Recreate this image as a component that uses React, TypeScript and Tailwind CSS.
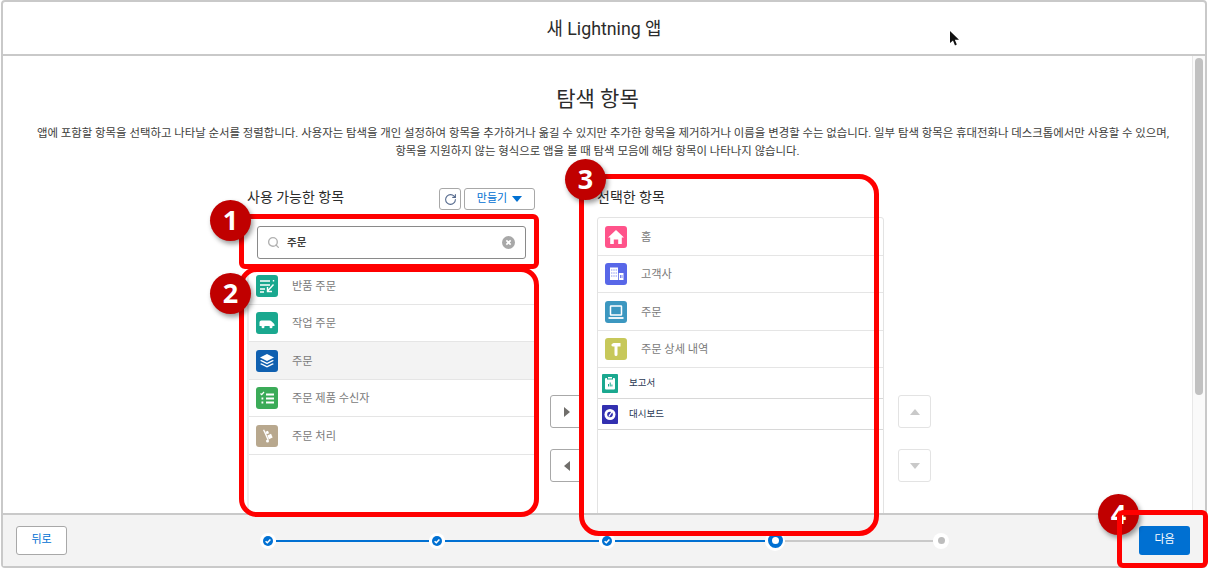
import { RotateCw, Search } from "lucide-react";
import type { ReactNode } from "react";

function Tile({ color, small, children }: { color: string; small?: boolean; children: ReactNode }) {
  return (
    <span
      className={`flex shrink-0 items-center justify-center ${small ? "h-[19px] w-[16px] rounded-[1px]" : "mt-[1px] h-[22px] w-[22px] rounded-[3px]"} ${color}`}
    >
      {children}
    </span>
  );
}

const ReturnIcon = (
  <svg viewBox="0 0 22 22" className="h-[22px] w-[22px]" fill="none" stroke="white" strokeWidth="1.4">
    <path d="M4 6h10M4 10h10M4 14h5M4 17h4" />
    <path d="M17.5 5v1.5M17.5 9.5l-5.5 6M11.5 12v4.5h4.5" />
  </svg>
);
const VanIcon = (
  <svg viewBox="0 0 22 22" className="h-[22px] w-[22px]" fill="white">
    <path d="M3.5 10.5c0-1.2.8-2 2-2h8c1 0 1.600.4 2.200 1l1.800 1.700c.6.4 1 1 1 1.800v1H3.500z" />
    <circle cx="7" cy="14.800" r="1.500" />
    <circle cx="15" cy="14.800" r="1.500" />
  </svg>
);
const StackIcon = (
  <svg viewBox="0 0 22 22" className="h-[22px] w-[22px]" fill="white">
    <path d="M11 4l7 3.500-7 3.500-7-3.500z" />
    <path d="M5.500 10l5.500 2.700 5.500-2.700 1.500.8-7 3.500-7-3.500z" />
    <path d="M5.500 13.300l5.500 2.700 5.500-2.700 1.500.8-7 3.500-7-3.500z" />
  </svg>
);
const ChecklistIcon = (
  <svg viewBox="0 0 22 22" className="h-[22px] w-[22px]" fill="none" stroke="white" strokeWidth="1.800">
    <path d="M10 7.500h8M10 11.500h8M10 15.500h8" />
    <path d="M4.500 6.500l1.200 1.200L8 5" strokeWidth="1.200" />
    <path d="M5.500 11.500h1.800M5.500 15.500h1.800" />
  </svg>
);
const DollyIcon = (
  <svg viewBox="0 0 22 22" className="h-[22px] w-[22px]" fill="white">
    <path d="M7 5l1.200-.6 4.600 10.200-1.200.6z" />
    <rect x="12" y="9.500" width="4" height="4" transform="rotate(-24 14 11.500)" />
    <rect x="9.800" y="6.200" width="2.800" height="2.800" transform="rotate(-24 11 7.500)" />
    <circle cx="11.500" cy="16" r="1.500" />
  </svg>
);
const HomeIcon = (
  <svg viewBox="0 0 22 22" className="h-[22px] w-[22px]" fill="white">
    <path d="M11 4l8 7.500h-2.200V18h-3.600v-4.500H8.800V18H5.200v-6.500H3z" />
  </svg>
);
const BuildingIcon = (
  <svg viewBox="0 0 22 22" className="h-[22px] w-[22px]" fill="white">
    <path fillRule="evenodd" d="M5 4.500h8V17H5zM6.300 6.500v1h1v-1zM8.500 6.500v1h1v-1zM10.700 6.500v1h1v-1zM6.300 9.500v1h1v-1zM8.500 9.500v1h1v-1zM10.700 9.500v1h1v-1zM6.300 12.500v1h1v-1zM8.500 12.500v1h1v-1zM10.700 12.500v1h1v-1z" />
    <path fillRule="evenodd" d="M13.800 10H18.500v7h-4.700zM15 12v3h.8v-3zM16.600 12v3h.8v-3z" />
  </svg>
);
const LaptopIcon = (
  <svg viewBox="0 0 22 22" className="h-[22px] w-[22px]" fill="none" stroke="white" strokeWidth="1.500">
    <rect x="5.500" y="5" width="11" height="9" rx="0.500" />
    <path d="M3.500 17h15" strokeWidth="1.800" />
  </svg>
);
const HammerIcon = (
  <svg viewBox="0 0 22 22" className="h-[22px] w-[22px]" fill="white">
    <path d="M9.500 5H15.500v3.500h-3V16.500a1.500 1.500 0 0 1-3 0V8.500H8C6.800 8.500 6.300 7.500 6.500 6.500 7.200 5.500 8.300 5 9.500 5z" />
  </svg>
);
const ClipboardIcon = (
  <svg viewBox="0 0 16 19" className="h-[19px] w-[16px]" fill="white">
    <path fillRule="evenodd" d="M6 3h4v1.500H6zM4 4h1v1.500h6V4h1a1 1 0 0 1 1 1v9.500a1 1 0 0 1-1 1H4a1 1 0 0 1-1-1V5a1 1 0 0 1 1-1zM6 10v2.500h1V10zM7.700 8.500v4h1v-4zM9.400 10.500v2h1v-2z" />
  </svg>
);
const GaugeIcon = (
  <svg viewBox="0 0 16 19" className="h-[19px] w-[16px]">
    <circle cx="8" cy="9.500" r="5.500" fill="white" />
    <circle cx="8" cy="9.500" r="2.800" fill="#3230b0" />
    <path d="M6.800 11.500L9.800 7" stroke="white" strokeWidth="1.300" />
  </svg>
);

function Row({ icon, label, active }: { icon: ReactNode; label: string; active?: boolean }) {
  return (
    <div
      className={`flex h-[37.5px] items-center gap-[14px] border-b border-[#e5e5e5] pl-[7px] text-[11.2px] text-[#7a7a7a] ${active ? "bg-[#f3f3f3]" : ""}`}
    >
      {icon}
      <span className="mt-[4px]">{label}</span>
    </div>
  );
}

function SmallRow({ icon, label }: { icon: ReactNode; label: string }) {
  return (
    <div className="flex h-[31px] items-center gap-[11px] border-b border-[#d8d8d8] pl-[4px] text-[9.5px] text-[#2b3a55]">
      {icon}
      <span>{label}</span>
    </div>
  );
}

function ArrowButton({ dir, disabled }: { dir: "left" | "right" | "up" | "down"; disabled?: boolean }) {
  const paths = { right: "M5 3l6 5-6 5z", left: "M11 3L5 8l6 5z", up: "M3 11l5-6 5 6z", down: "M3 5l5 6 5-6z" };
  return (
    <div
      className={`flex h-[33px] w-[33px] items-center justify-center rounded-[3px] border bg-white ${disabled ? "border-[#e3e3e3]" : "border-[#a8a8a8]"}`}
    >
      <svg viewBox="0 0 16 16" className="h-[16px] w-[16px]" fill={disabled ? "#c9c9c9" : "#706e6b"}>
        <path d={paths[dir]} />
      </svg>
    </div>
  );
}

function Step({ state }: { state: "done" | "active" | "todo" }) {
  if (state === "active") {
    return (
      <span className="flex h-[20px] w-[20px] shrink-0 items-center justify-center rounded-full bg-white">
        <span className="h-[15px] w-[15px] rounded-full border-[4px] border-[#0070d2] bg-white" />
      </span>
    );
  }
  return (
    <span className="flex h-[16px] w-[16px] shrink-0 items-center justify-center rounded-full bg-white">
      {state === "done" ? (
        <span className="flex h-[10px] w-[10px] items-center justify-center rounded-full bg-[#0070d2]">
          <svg viewBox="0 0 10 10" className="h-[10px] w-[10px]" fill="none" stroke="white" strokeWidth="1.5">
            <path d="M2.600 5.200l1.700 1.600 3.100-3.400" />
          </svg>
        </span>
      ) : (
        <span className="h-[7px] w-[7px] rounded-full bg-[#bdbdbd]" />
      )}
    </span>
  );
}

function Badge({ n, className }: { n: string; className: string }) {
  return (
    <div
      className={`absolute flex h-[41px] w-[41px] items-center justify-center rounded-full bg-[#c00000] font-['Open_Sans',sans-serif] text-[27px] font-bold text-white shadow-[2px_3px_5px_rgba(0,0,0,0.4)] ${className}`}
    >
      {n}
    </div>
  );
}

export default function App() {
  return (
    <div className="relative h-[570px] w-[1210px] overflow-hidden bg-white font-['Roboto','Noto_Sans_CJK_KR',sans-serif]">
      <div className="ml-[1px] flex h-[568px] w-[1206px] flex-col rounded-[4px] border-2 border-[#c9c9c9]">
        <header className="flex h-[54px] shrink-0 items-center justify-center border-b-2 border-[#c9c9c9] pt-[2px] text-[17.8px] text-[#2b2b2b]">
          새 Lightning 앱
        </header>

        <div className="flex min-h-0 flex-1">
          <main className="min-w-0 flex-1 overflow-hidden">
            <h1 className="mt-[28px] text-center text-[21px] leading-[30px] text-[#2b2b2b]">탐색 항목</h1>
            <p className="mt-[10px] text-center text-[11.42px] leading-[18px] text-[#3e3e3c]">
              <span className="pl-[11px]">
                앱에 포함할 항목을 선택하고 나타날 순서를 정렬합니다. 사용자는 탐색을 개인 설정하여 항목을 추가하거나 옮길 수 있지만 추가한 항목을 제거하거나 이름을 변경할 수는 없습니다. 일부 탐색 항목은 휴대전화나 데스크톱에서만 사용할 수 있으며,
              </span>
              <br />
              항목을 지원하지 않는 형식으로 앱을 볼 때 탐색 모음에 해당 항목이 나타나지 않습니다.
            </p>

            <div className="ml-[244px] mt-[26px] flex">
              <section className="w-[288px]">
                <div className="flex h-[24px] items-center justify-between">
                  <span className="mb-[2px] text-[14px] text-[#2b2b2b]">사용 가능한 항목</span>
                  <div className="mt-[2px] flex gap-[3px]">
                    <span className="flex h-[22px] w-[22px] items-center justify-center rounded-[3px] border border-[#a8a8a8] text-[#54698d]">
                      <RotateCw size={13} />
                    </span>
                    <span className="flex h-[22px] w-[71px] items-center justify-center gap-[5px] rounded-[3px] border border-[#a8a8a8] text-[11px] text-[#0070d2]">
                      만들기
                      <svg viewBox="0 0 10 6" className="h-[6px] w-[10px]" fill="#0070d2">
                        <path d="M0 0h10L5 6z" />
                      </svg>
                    </span>
                  </div>
                </div>
                <div className="ml-[10px] mt-[16px] flex h-[33px] w-[269px] items-center rounded-[3px] border border-[#8a8a8a] pl-[9px] pr-[10px] text-[10.5px] font-bold text-[#3e3e3c]">
                  <Search size={13} strokeWidth={2.5} className="text-[#b0b0b0]" />
                  <span className="ml-[7px] flex-1">주문</span>
                  <svg viewBox="0 0 12 12" className="h-[13px] w-[13px]">
                    <circle cx="6" cy="6" r="6" fill="#a8a8a8" />
                    <path d="M4 4l4 4M8 4l-4 4" stroke="white" strokeWidth="1.5" />
                  </svg>
                </div>
                <div className="mt-[8px] h-[300px] border-l-2 border-[#eeeeee]">
                  <Row icon={<Tile color="bg-[#1aa88f]">{ReturnIcon}</Tile>} label="반품 주문" />
                  <Row icon={<Tile color="bg-[#1aa88f]">{VanIcon}</Tile>} label="작업 주문" />
                  <Row icon={<Tile color="bg-[#1060b0]">{StackIcon}</Tile>} label="주문" active />
                  <Row icon={<Tile color="bg-[#3bab58]">{ChecklistIcon}</Tile>} label="주문 제품 수신자" />
                  <Row icon={<Tile color="bg-[#b8a88e]">{DollyIcon}</Tile>} label="주문 처리" />
                </div>
              </section>

              <div className="ml-[15px] mt-[209px] flex flex-col gap-[21px]">
                <ArrowButton dir="right" />
                <ArrowButton dir="left" />
              </div>

              <section className="ml-[14px] w-[287px]">
                <div className="flex h-[24px] items-center text-[14px] text-[#2b2b2b]">
                  <span className="mb-[2px]">선택한 항목</span>
                </div>
                <div className="mt-[7px] h-[320px] rounded-t-[3px] border border-[#e3e3e3]">
                  <Row icon={<Tile color="bg-[#ff538a]">{HomeIcon}</Tile>} label="홈" />
                  <Row icon={<Tile color="bg-[#5867e8]">{BuildingIcon}</Tile>} label="고객사" />
                  <Row icon={<Tile color="bg-[#3c97c0]">{LaptopIcon}</Tile>} label="주문" />
                  <Row icon={<Tile color="bg-[#c7c85a]">{HammerIcon}</Tile>} label="주문 상세 내역" />
                  <SmallRow icon={<Tile small color="bg-[#1aa88f]">{ClipboardIcon}</Tile>} label="보고서" />
                  <SmallRow icon={<Tile small color="bg-[#3230b0]">{GaugeIcon}</Tile>} label="대시보드" />
                </div>
              </section>

              <div className="ml-[14px] mt-[209px] flex flex-col gap-[21px]">
                <ArrowButton dir="up" disabled />
                <ArrowButton dir="down" disabled />
              </div>
            </div>
          </main>

          <aside className="w-[13px] shrink-0 border-l border-[#e8e8e8] bg-[#fafafa] pl-[2px] pt-[2px]">
            <div className="h-[337px] w-[8px] rounded-full bg-[#c1c1c1]" />
          </aside>
        </div>

        <footer className="flex h-[53px] shrink-0 items-center justify-between border-t-2 border-[#c9c9c9] bg-[#f3f3f3] pl-[13px] pr-[15px]">
          <button className="h-[29px] w-[51px] rounded-[3px] border border-[#a8a8a8] bg-white text-[11px] text-[#0070d2]">뒤로</button>
          <div className="ml-[3px] flex items-center">
            <Step state="done" />
            <span className="h-[2px] w-[153px] bg-[#0070d2]" />
            <Step state="done" />
            <span className="h-[2px] w-[154px] bg-[#0070d2]" />
            <Step state="done" />
            <span className="h-[2px] w-[150px] bg-[#0070d2]" />
            <Step state="active" />
            <span className="h-[2px] w-[148px] bg-[#c9c9c9]" />
            <Step state="todo" />
          </div>
          <button className="h-[29px] w-[51px] rounded-[3px] bg-[#0070d2] text-[11px] text-white">다음</button>
        </footer>
      </div>

      {/* mouse pointer */}
      <svg viewBox="0 0 12 16" className="absolute left-[949px] top-[31px] h-[16px] w-[12px]" fill="#111111">
        <path d="M1 0v12l3-2.6 2 5 1.8-.8-2-4.8H10z" />
      </svg>

      {/* red call-outs drawn over the screenshot */}
      <div className="absolute left-[239px] top-[214px] h-[55px] w-[300px] rounded-[6px] border-[5px] border-[#ff0000]" />
      <div className="absolute left-[239px] top-[267px] h-[250px] w-[300px] rounded-[18px] border-[5px] border-[#ff0000]" />
      <div className="absolute left-[579px] top-[174px] h-[362px] w-[300px] rounded-[20px] border-[5px] border-[#ff0000]" />
      <Badge n="1" className="left-[210px] top-[200px]" />
      <Badge n="2" className="left-[210px] top-[273px]" />
      <Badge n="3" className="left-[565px] top-[159px]" />
      <Badge n="4" className="left-[1098px] top-[494px]" />
      <div className="absolute left-[1117px] top-[510px] h-[58px] w-[91px] rounded-[6px] border-[5px] border-[#ff0000]" />
    </div>
  );
}
